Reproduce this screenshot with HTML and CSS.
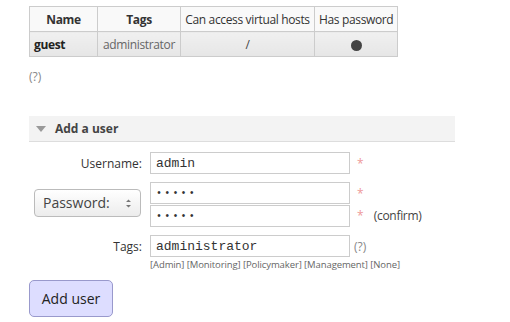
FILE: index.html
```html
<!DOCTYPE html>
<html lang="en">
<head>
    <meta charset="UTF-8">
    <title>Users</title>
    <link rel="stylesheet" href="styles.css">
</head>
<body>

    <table class="users">
        <thead>
            <tr>
                <th class="col-name">Name</th>
                <th class="col-tags">Tags</th>
                <th class="col-vhosts">Can access virtual hosts</th>
                <th class="col-pass">Has password</th>
            </tr>
        </thead>
        <tbody>
            <tr>
                <td class="user-name">guest</td>
                <td class="center grey">administrator</td>
                <td class="center">/</td>
                <td class="center"><span class="dot"></span></td>
            </tr>
        </tbody>
    </table>

    <p class="help">(?)</p>

    <div class="section">
        <div class="section-header">
            <span class="triangle"></span>
            <h2>Add a user</h2>
        </div>

        <form class="user-form">
            <label class="label" for="username">Username:</label>
            <input class="field" id="username" type="text" value="admin">
            <span class="mandatory">*</span>

            <div class="select-wrap">
                <select class="select">
                    <option>Password:</option>
                </select>
                <svg class="select-arrows" width="7" height="11" viewBox="0 0 7 11">
                    <path d="M1 4 L3.5 1.5 L6 4 Z M1 7 L3.5 9.5 L6 7 Z" fill="#777"/>
                </svg>
            </div>
            <input class="field pass" type="password" value="guest">
            <span class="mandatory pass-mark">*</span>
            <input class="field pass confirm" type="password" value="guest">
            <span class="mandatory confirm">* <span class="note">(confirm)</span></span>

            <label class="label tags-label" for="tags">Tags:</label>
            <input class="field tags-field" id="tags" type="text" value="administrator">
            <span class="help inline tags-help">(?)</span>
            <div class="tag-links">
                <span>[Admin]</span>
                <span>[Monitoring]</span>
                <span>[Policymaker]</span>
                <span>[Management]</span>
                <span>[None]</span>
            </div>

            <div class="actions">
                <button class="button" type="button">Add user</button>
            </div>
        </form>
    </div>

</body>
</html>
```

FILE: styles.css
```css
:root {
    --border-color: #cccccc;
    --text-color: #444444;
    --light-text-color: #888888;
    --mandatory-color: #ee9999;
    --font-family: "Open Sans", "Noto Sans", sans-serif;
    --font-family-monospace: "Liberation Mono", monospace;
}
body, html {
    margin: 0;
    background-color: #ffffff;
    color: var(--text-color);
    font-family: var(--font-family);
    font-size: 12px;
}
body {
    padding: 6px 0 0 29px;
}

/* --- USERS TABLE --- */
.users {
    border-collapse: collapse;
    letter-spacing: -0.35px;
}
.users th, .users td {
    border: 1px solid var(--border-color);
    height: 24px;
    padding: 0 4px;
    white-space: nowrap;
}
.users th {
    background-color: #f9f9f9;
    font-weight: normal;
    color: #333;
}
.users td {
    background: linear-gradient(#f0f0f0, #e6e6e6);
}
.col-name, .col-tags {
    font-weight: bold !important;
}
.col-name { width: 59px; }
.col-tags { width: 74px; }
.col-vhosts { width: 125px; }
.col-pass { width: 73px; }
.user-name {
    font-weight: bold;
    color: #222;
}
.center { text-align: center; }
.grey { color: #666; }
.dot {
    display: inline-block;
    width: 11px;
    height: 11px;
    border-radius: 50%;
    background-color: #444;
    vertical-align: middle;
}

.help {
    color: var(--light-text-color);
    font-size: 12px;
    margin: 11px 0 0 0;
}

/* --- ADD USER SECTION --- */
.section {
    width: 426px;
    margin-top: 31px;
}
.section-header {
    display: flex;
    align-items: center;
    gap: 9px;
    height: 25px;
    padding-left: 7px;
    background-color: #f3f3f3;
    border-bottom: 1px solid #dddddd;
}
.section-header h2 {
    margin: 0;
    font-size: 12px;
    font-weight: bold;
    color: #444;
}
.triangle {
    width: 0;
    height: 0;
    border-left: 5px solid transparent;
    border-right: 5px solid transparent;
    border-top: 6px solid #999;
}

.user-form {
    display: grid;
    grid-template-columns: 114px 200px auto;
    column-gap: 7px;
    align-items: center;
    margin-top: 10px;
}
.label {
    text-align: right;
    font-size: 12px;
    color: #333;
    padding-right: 1px;
}
.field {
    box-sizing: border-box;
    width: 200px;
    height: 22px;
    border: 1px solid var(--border-color);
    padding: 0 5px;
    font-family: var(--font-family-monospace);
    font-size: 13px;
    color: #333;
    outline: none;
}
.field.pass {
    margin-top: 8px;
    font-size: 10px;
    letter-spacing: 2.2px;
}
.field.confirm {
    margin-top: 1px;
    grid-column: 2;
}
.mandatory {
    color: var(--mandatory-color);
    padding-left: 0;
}
.mandatory.pass-mark {
    margin-top: 8px;
}
.mandatory.confirm {
    grid-column: 3;
}
.note {
    color: #444;
    margin-left: 7px;
    letter-spacing: -0.3px;
}
.select-wrap {
    position: relative;
    grid-row: span 2;
    margin: 4px 2px 0 5px;
    align-self: center;
}
.select {
    appearance: none;
    box-sizing: border-box;
    width: 107px;
    height: 28px;
    padding: 0 0 0 8px;
    border: 1px solid #bbbbbb;
    border-radius: 4px;
    background: linear-gradient(#ffffff, #ececec);
    font-family: var(--font-family);
    font-size: 14px;
    color: #444;
}
.select-arrows {
    position: absolute;
    right: 9px;
    top: 9px;
}
.tags-label, .tags-field, .tags-help {
    margin-top: 8px;
}
.help.inline {
    margin: 8px 0 0 -3px;
}
.tag-links {
    grid-column: 2 / span 2;
    font-size: 9.5px;
    color: #666;
    margin-top: 1px;
    white-space: nowrap;
    letter-spacing: -0.1px;
}

.actions {
    grid-column: 1 / span 3;
    margin-top: 9px;
}
.button {
    width: 84px;
    height: 37px;
    background-color: #ddddff;
    border: 1px solid #9999cc;
    border-radius: 5px;
    font-family: var(--font-family);
    font-size: 14px;
    color: #222;
}
```
